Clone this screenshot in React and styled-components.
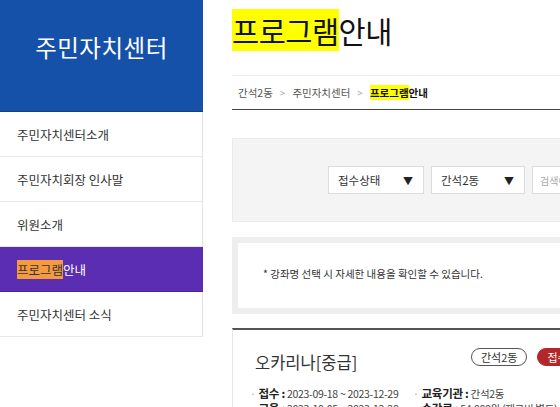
import React from "react";
import styled, { createGlobalStyle } from "styled-components";

const Global = createGlobalStyle`
  html, body { margin: 0; padding: 0; background: #fff; }
  body { font-family: "Noto Sans CJK KR", "Noto Sans", sans-serif; color: #333; }
  * { box-sizing: border-box; }
`;

const Page = styled.div`
  display: flex;
  width: 560px;
  height: 407px;
  overflow: hidden;
`;

const Sidebar = styled.aside`
  flex: 0 0 203px;
  align-self: flex-start;
  border-right: 1px solid #e2e2e2;
`;

const SideHead = styled.div`
  height: 112px;
  background: #1651a9;
  color: #fff;
  display: flex;
  align-items: center;
  justify-content: center;
  font-size: 23.5px;
  letter-spacing: 0.5px;
  padding-bottom: 18px;
  margin-right: -1px;
  border-bottom: 1px solid #0f3f8a;
`;

const Menu = styled.ul`
  list-style: none;
  margin: 0;
  padding: 0;
`;

const MenuItem = styled.li`
  height: 45px;
  display: flex;
  align-items: center;
  padding-left: 17px;
  font-size: 12.5px;
  color: ${(p) => (p.$active ? "#fff" : "#333")};
  background: ${(p) => (p.$active ? "#5a2db2" : "#fff")};
  border-bottom: 1px solid ${(p) => (p.$active ? "#4a2196" : "#e8e8e8")};
  margin-right: ${(p) => (p.$active ? "-1px" : "0")};
`;

const OrangeMark = styled.span`
  background: #f59a3e;
  color: #333;
`;

const Main = styled.main`
  flex: 0 0 700px;
  margin-left: 29px;
  padding-top: 12px;
`;

const Title = styled.h1`
  margin: 0;
  font-size: 29.5px;
  font-weight: 400;
  line-height: 36px;
  color: #111;
  letter-spacing: -0.5px;
`;

const Yellow = styled.span`
  background: #ffff00;
`;

const Crumbs = styled.nav`
  margin-top: 27px;
  height: 35px;
  border-top: 1px solid #ececec;
  border-bottom: 1px solid #444;
  display: flex;
  align-items: center;
  gap: 7px;
  padding-left: 6px;
  font-size: 10.5px;
  color: #555;
`;

const Sep = styled.span`
  color: #aaa;
  font-size: 10px;
`;

const Current = styled.span`
  font-weight: 700;
  color: #111;
`;

const SearchBox = styled.div`
  margin-top: 28px;
  height: 84px;
  background: #f4f4f4;
  border: 1px solid #ebebeb;
  display: flex;
  align-items: center;
  gap: 7px;
  padding-left: 95px;
`;

const Select = styled.div`
  width: ${(p) => p.$w}px;
  height: 28px;
  background: #fff;
  border: 1px solid #dcdcdc;
  display: flex;
  align-items: center;
  justify-content: space-between;
  padding: 0 10px 0 9px;
  font-size: 11.5px;
  color: #333;
`;

const Arrow = styled.span`
  font-size: 10px;
  color: #222;
`;

const Input = styled.div`
  width: 120px;
  height: 28px;
  background: #fff;
  border: 1px solid #dcdcdc;
  display: flex;
  align-items: center;
  padding-left: 7px;
  font-size: 10px;
  color: #aaa;
`;

const Notice = styled.div`
  margin-top: 15px;
  height: 77px;
  border: 6px solid #eeeeee;
  background: #fff;
  display: flex;
  align-items: center;
  padding-left: 25px;
  padding-bottom: 4px;
  font-size: 10.5px;
  color: #333;
`;

const Card = styled.section`
  margin-top: 14px;
  border-top: 2px solid #555;
  border-left: 1px solid #e6e6e6;
  padding: 16px 0 0 22px;
`;

const CardHead = styled.div`
  display: flex;
  align-items: center;
  height: 30px;
`;

const CardTitle = styled.h2`
  margin: 0;
  font-size: 16.5px;
  font-weight: 400;
  color: #333;
  width: 216px;
  padding-top: 2px;
`;

const Badge = styled.span`
  height: 18px;
  padding: 0 9px;
  border-radius: 9px;
  font-size: 11px;
  line-height: 16px;
  display: inline-flex;
  align-items: center;
  margin-right: 10px;
  margin-bottom: 8px;
  border: 1px solid ${(p) => (p.$red ? "#b3262a" : "#555")};
  background: ${(p) => (p.$red ? "#b3262a" : "#fff")};
  color: ${(p) => (p.$red ? "#fff" : "#333")};
`;

const InfoGrid = styled.div`
  display: grid;
  grid-template-columns: 163px 200px;
  margin-top: 10px;
  margin-left: -5px;
  font-size: 10.5px;
  line-height: 15px;
  color: #444;
  letter-spacing: -0.3px;
`;

const Info = styled.div`
  white-space: nowrap;
  &::before {
    content: "·";
    color: #aaa;
    margin-right: 3px;
  }
  b { color: #222; font-size: 11.5px; }
`;

const menu = ["주민자치센터소개", "주민자치회장 인사말", "위원소개", "PROGRAM", "주민자치센터 소식"];

export default function App() {
  return (
    <>
      <Global />
      <Page>
        <Sidebar>
          <SideHead>주민자치센터</SideHead>
          <Menu>
            {menu.map((m) =>
              m === "PROGRAM" ? (
                <MenuItem key={m} $active>
                  <OrangeMark>프로그램</OrangeMark>안내
                </MenuItem>
              ) : (
                <MenuItem key={m}>{m}</MenuItem>
              )
            )}
          </Menu>
        </Sidebar>
        <Main>
          <Title>
            <Yellow>프로그램</Yellow>안내
          </Title>
          <Crumbs>
            <span>간석2동</span>
            <Sep>&gt;</Sep>
            <span>주민자치센터</span>
            <Sep>&gt;</Sep>
            <Current>
              <Yellow>프로그램</Yellow>안내
            </Current>
          </Crumbs>
          <SearchBox>
            <Select $w={96}>
              <span>접수상태</span>
              <Arrow>▼</Arrow>
            </Select>
            <Select $w={94}>
              <span>간석2동</span>
              <Arrow>▼</Arrow>
            </Select>
            <Input>검색어</Input>
          </SearchBox>
          <Notice>* 강좌명 선택 시 자세한 내용을 확인할 수 있습니다.</Notice>
          <Card>
            <CardHead>
              <CardTitle>오카리나[중급]</CardTitle>
              <Badge>간석2동</Badge>
              <Badge $red>접수중</Badge>
            </CardHead>
            <InfoGrid>
              <Info>
                <b>접수 :</b> 2023-09-18 ~ 2023-12-29
              </Info>
              <Info>
                <b>교육기관 :</b> 간석2동
              </Info>
              <Info>
                <b>교육 :</b> 2023-10-05 ~ 2023-12-28
              </Info>
              <Info>
                <b>수강료 :</b> 54,000원 (재료비 별도)
              </Info>
            </InfoGrid>
          </Card>
        </Main>
      </Page>
    </>
  );
}
